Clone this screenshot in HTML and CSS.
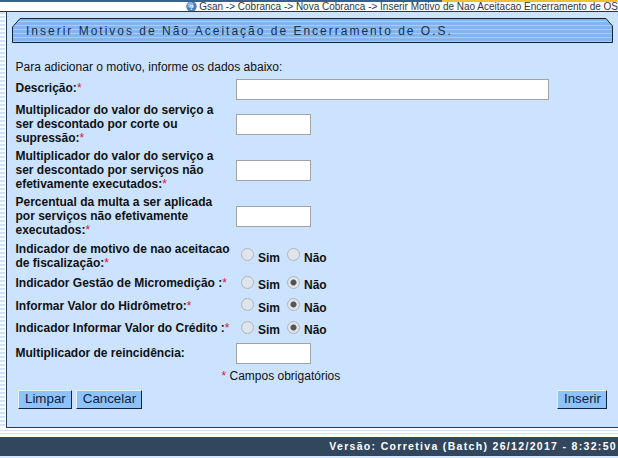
FILE: index.html
```html
<!DOCTYPE html>
<html lang="pt">
<head>
<meta charset="utf-8">
<title>Inserir Motivos</title>
<link rel="stylesheet" href="styles.css">
</head>
<body>
<div class="topline"><div class="top-blue"></div><div class="top-orange"></div></div>
<div class="crumbs">
  <svg class="help" width="11" height="11" viewBox="0 0 11 11"><circle cx="5.5" cy="5.5" r="5.2" fill="#4a7fb8"/><circle cx="4.5" cy="4" r="3" fill="#8db6dc"/><text x="5.5" y="8.5" text-anchor="middle" class="help-q">?</text></svg>
  <span>Gsan -&gt; Cobranca -&gt; Nova Cobranca -&gt; Inserir Motivo de Nao Aceitacao Encerramento de OS</span>
</div>
<div class="main">
  <div class="strip"></div>
  <div class="panel">
    <div class="title">
      <svg class="title-bg" width="602" height="25" viewBox="0 0 602 25" preserveAspectRatio="none">
        <defs><pattern id="st" width="4" height="4" patternUnits="userSpaceOnUse"><rect width="4" height="4" fill="#82b4ee"/><rect y="3" width="4" height="1" fill="#a9cdf4"/></pattern></defs>
        <path d="M.5 24.5V9L8 .5H594L600.500 8V24.500Z" fill="url(#st)" stroke="#0e2240"/>
      </svg>
      <span class="title-text">Inserir Motivos de Não Aceitação de Encerramento de O.S.</span>
    </div>
    <p class="intro">Para adicionar o motivo, informe os dados abaixo:</p>
    <div class="row r-input"><label class="lbl">Descrição:<i>*</i></label><input class="field wide" type="text"></div>
    <div class="row r-three"><label class="lbl">Multiplicador do valor do serviço a ser descontado por corte ou supressão:<i>*</i></label><input class="field" type="text"></div>
    <div class="row r-three"><label class="lbl">Multiplicador do valor do serviço a ser descontado por serviços não efetivamente executados:<i>*</i></label><input class="field" type="text"></div>
    <div class="row r-three"><label class="lbl">Percentual da multa a ser aplicada por serviços não efetivamente executados:<i>*</i></label><input class="field" type="text"></div>
    <div class="row r-two"><label class="lbl">Indicador de motivo de nao aceitacao de fiscalização:<i>*</i></label>
      <div class="opts"><span class="radio"></span><b class="opt">Sim</b><span class="radio"></span><b class="opt">Não</b></div></div>
    <div class="row r-one"><label class="lbl">Indicador Gestão de Micromedição :<i>*</i></label>
      <div class="opts"><span class="radio"></span><b class="opt">Sim</b><span class="radio on"></span><b class="opt">Não</b></div></div>
    <div class="row r-one"><label class="lbl">Informar Valor do Hidrômetro:<i>*</i></label>
      <div class="opts"><span class="radio"></span><b class="opt">Sim</b><span class="radio on"></span><b class="opt">Não</b></div></div>
    <div class="row r-one"><label class="lbl">Indicador Informar Valor do Crédito :<i>*</i></label>
      <div class="opts"><span class="radio"></span><b class="opt">Sim</b><span class="radio on"></span><b class="opt">Não</b></div></div>
    <div class="row r-input r-last"><label class="lbl">Multiplicador de reincidência:</label><input class="field" type="text"></div>
    <p class="req"><i>*</i> Campos obrigatórios</p>
    <div class="actions">
      <button class="btn" type="button">Limpar</button>
      <button class="btn" type="button">Cancelar</button>
      <button class="btn push" type="button">Inserir</button>
    </div>
  </div>
</div>
<div class="gap-lines"></div>
<footer class="footer">Versão: Corretiva (Batch) 26/12/2017 - 8:32:50</footer>
</body>
</html>
```
FILE: styles.css
```css
* { box-sizing: border-box; }
html, body { margin: 0; padding: 0; }
body {
  width: 618px; height: 458px; overflow: hidden; background: #d5e8fb;
  font-family: "Liberation Sans", Arial, sans-serif; font-size: 12px; color: #111;
}
.topline { display: flex; height: 2px; }
.top-blue { width: 442px; background: #35608f; }
.top-orange { flex: 1; background: #f5c030; }
.crumbs {
  height: 10px; display: flex; justify-content: flex-end; align-items: center; white-space: nowrap;
  font-size: 10px; line-height: 10px; color: #333; overflow: hidden; gap: 2px; background: #fff;
  border-bottom: 1px solid #333;
}
.help { flex: none; }
.help-q { font-size: 8px; fill: #fff; font-weight: bold; }
.main { display: flex; height: 416px; background: #fff; }
.strip {
  width: 6px;
  background: repeating-linear-gradient(180deg, #cfe3f7 0 2px, #fff 2px 4px);
  border-right: 1px solid #fff;
}
.panel {
  flex: 1; background: #cbe3fe; border-left: 1px solid #2a3a4c; border-bottom: 1px solid #2a3a4c;
  padding: 6px 4px 0 5px;
}
.title { position: relative; height: 25px; width: 601px; display: flex; align-items: center; padding-left: 14px; }
.title-bg { position: absolute; left: 0; top: 0; }
.title-text { position: relative; letter-spacing: 2px; font-size: 12px; color: #1c2f48; }
.intro { margin: 17px 0 0; padding-left: 3.500px; line-height: 14px; }
.row { display: flex; align-items: center; padding-left: 3.500px; }
.lbl { width: 220.500px; flex: none; font-weight: bold; line-height: 14px; padding-right: 5px; }
.lbl i, .req i { color: #e0103a; font-style: normal; font-weight: normal; }
.r-input { height: 26px; margin-top: 1px; }
.r-input .field { margin-top: 2px; }
.r-three { height: 46px; }
.r-two { height: 33px; }
.r-one { height: 22.500px; }
.r-last { margin-top: 0; }
.field { width: 75px; height: 21px; background: #fff; border: 1px solid #a3a3a3; padding: 0; margin: 0; }
.wide { width: 313px; }
.opts { display: flex; align-items: center; margin-left: 5px; }
.radio {
  width: 13px; height: 13px; border-radius: 50%; flex: none; position: relative; top: -1px;
  background: #dfe5ec; border: 1px solid #b4b4b4;
}
.radio.on { background: radial-gradient(circle, #555 0 2.500px, #dfe5ec 3.500px); }
.opt { margin-left: 4px; width: 29px; line-height: 14px; position: relative; top: 2px; }
.req { margin: 3px 0 0; line-height: 14px; padding-left: 209.500px; }
.actions { display: flex; gap: 4px; padding: 7px 7px 0 6px; }
.btn {
  height: 19px; padding: 0 5px 0 6px; font: 13.330px/1 "Liberation Sans", Arial, sans-serif; color: #10223a;
  background: #8ec2fa; border: 1px solid; border-color: #e6f2ff #0e2240 #0e2240 #e6f2ff;
}
.push { margin-left: auto; }
.gap-lines {
  height: 9px;
  background: linear-gradient(180deg, #fff 0 2px, #cfe3f7 2px 3px, #fff 3px 5px, #cfe3f7 5px 6px, #fff 6px 9px);
}
.footer {
  height: 19px; background: #32465d; color: #fff; font-weight: bold; font-size: 10.500px;
  letter-spacing: 1.32px; line-height: 19px; text-align: right; padding-right: 1px; white-space: nowrap;
}
```
